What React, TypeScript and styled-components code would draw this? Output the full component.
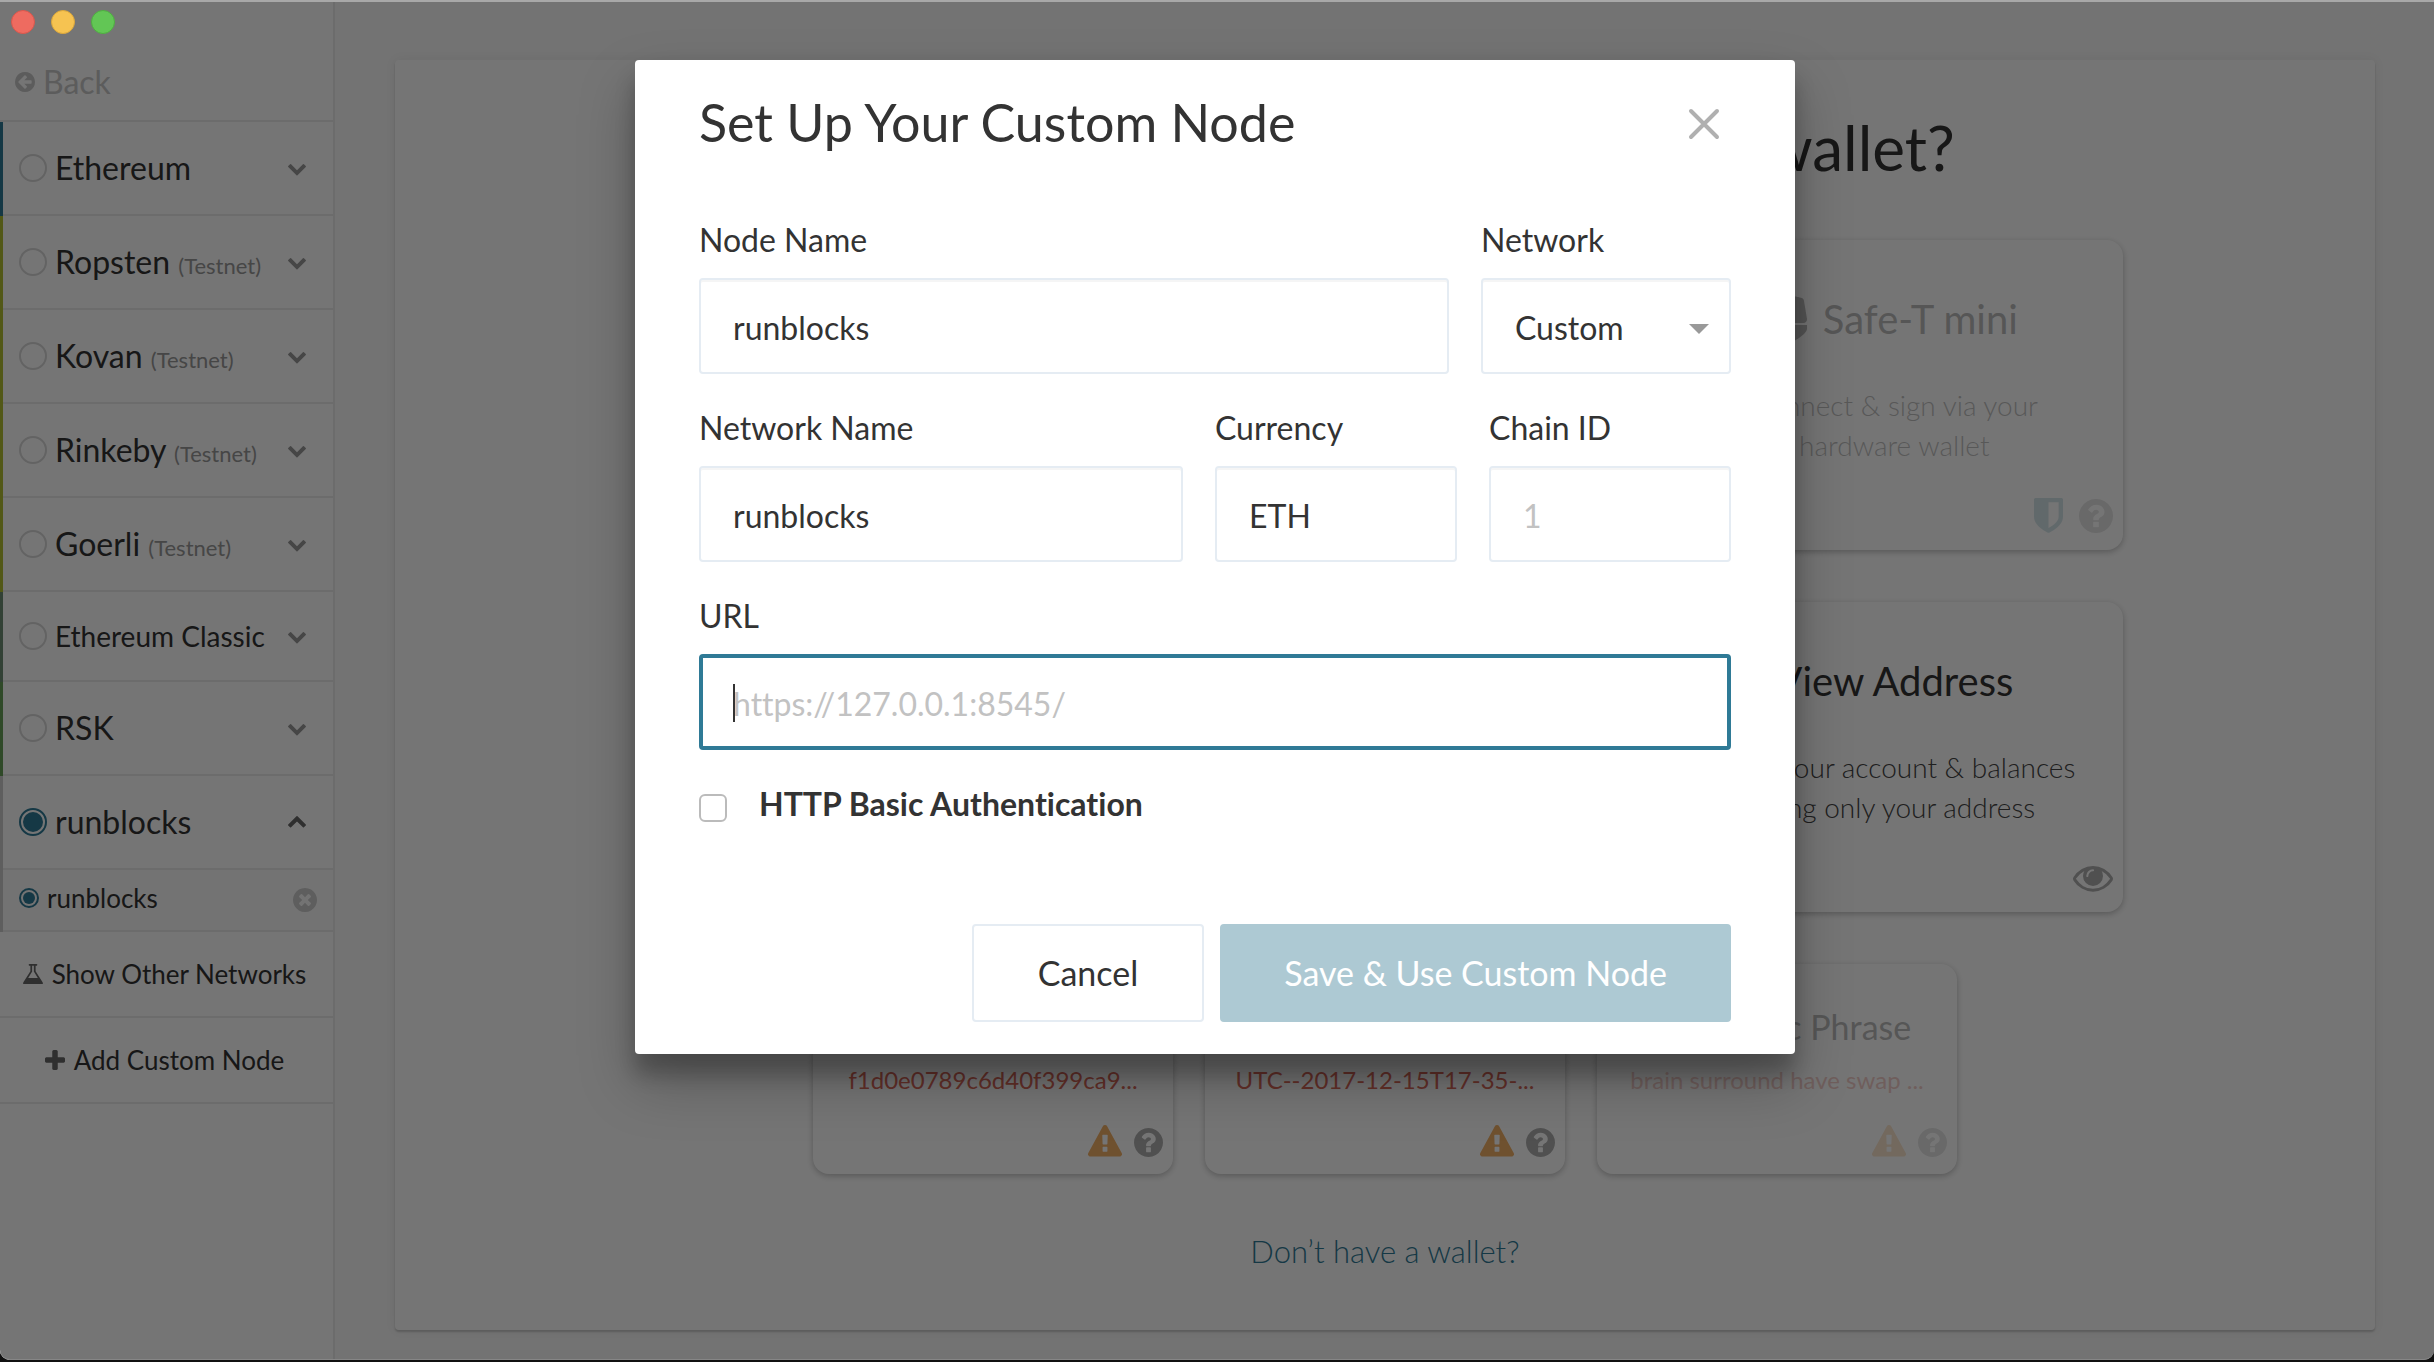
import React from 'react';
import styled, { createGlobalStyle, css } from 'styled-components';

const GlobalStyle = createGlobalStyle`
  *, *::before, *::after { box-sizing: border-box; }
  html, body, #root { height: 100%; }
  body {
    margin: 0;
    overflow: hidden;
    background: #111;
    color: #333;
    font-family: Lato, "Liberation Sans", sans-serif;
    font-size: 32px;
    line-height: 40px;
    font-variant-ligatures: none;
  }
  button, input, select { font: inherit; font-variant-ligatures: none; color: inherit; margin: 0; }
  button { background: none; border: 0; padding: 0; cursor: pointer; }
  h1, h2, h3, p, ul { margin: 0; padding: 0; font-weight: 400; }
  ul { list-style: none; }
`;

/* ---------- icons ---------- */

const CIRCLE =
  'm387-226q0 209-103 385.5t-279.5 279.5-385.5 103-385.5-103-279.5-279.5-103-385.5 103-385.5 279.5-279.5 385.5-103 385.5 103 279.5 279.5 103 385.5z';
const DISC =
  'M1664 896q0 209-103 385.5t-279.5 279.5-385.5 103-385.5-103-279.5-279.5-103-385.5 103-385.5 279.5-279.5 385.5-103 385.5 103 279.5 279.5 103 385.5z';

const ICONS = {
  question: {
    box: '128 128 1536 1536',
    d: 'M1024 1376v-192q0-14-9-23t-23-9h-192q-14 0-23 9t-9 23v192q0 14 9 23t23 9h192q14 0 23-9t9-23zm256-672q0-88-55.5-163t-138.5-116-170-41q-243 0-371 213-15 24 8 42l132 100q7 6 19 6 16 0 25-12 53-68 86-92 34-24 86-24 48 0 85.5 26t37.5 59q0 38-20 61t-68 45q-63 28-115.5 86.5t-52.5 125.5v36q0 14 9 23t23 9h192q14 0 23-9t9-23q0-19 21.5-49.5t54.5-49.5q32-18 49-28.5t46-35 44.5-48 28-60.5 12.5-81z' + DISC,
  },
  warning: {
    box: '0 0 1792 1664',
    d: 'M1024 1375v-190q0-14-9.5-23.5t-22.5-9.5h-192q-13 0-22.5 9.5t-9.5 23.5v190q0 14 9.5 23.5t22.5 9.5h192q13 0 22.5-9.5t9.5-23.5zm-2-374l18-459q0-12-10-19-13-11-24-11h-220q-11 0-24 11-10 7-10 21l17 457q0 10 10 16.5t24 6.5h185q14 0 23.5-6.5t10.5-16.5zm-14-934l768 1408q35 63-2 126-17 29-46.5 46t-63.5 17h-1536q-34 0-63.5-17t-46.5-46q-37-63-2-126l768-1408q17-31 47-49t65-18 65 18 47 49z',
  },
  shield: {
    box: '256 128 1280 1536',
    d: 'M1344 960v-640h-448v1137q119-63 213-137 235-184 235-360zm192-768v768q0 86-33.5 170.5t-83 150-118 127.5-126.5 103-121 77.5-89.5 49.5-42.5 20q-12 6-26 6t-26-6q-16-7-42.5-20t-89.5-49.5-121-77.5-126.5-103-118-127.5-83-150-33.5-170.5v-768q0-26 19-45t45-19h1152q26 0 45 19t19 45z',
  },
  eye: {
    box: '0 384 1792 1152',
    d: 'M1664 960q-152-236-381-353 61 104 61 225 0 185-131.5 316.5t-316.5 131.5-316.5-131.5-131.5-316.5q0-121 61-225-229 117-381 353 133 205 333.5 326.5t434.5 121.5 434.5-121.5 333.5-326.5zm-720-384q0-20-14-34t-34-14q-125 0-214.5 89.5t-89.5 214.5q0 20 14 34t34 14 34-14 14-34q0-86 61-147t147-61q20 0 34-14t14-34zm848 384q0 34-20 69-140 230-376.5 368.5t-499.5 138.5-499.5-139-376.5-368q-20-35-20-69t20-69q140-229 376.5-368t499.5-139 499.5 139 376.5 368q20 35 20 69z',
  },
  remove: {
    box: '128 128 1536 1536',
    d: 'M1277 1122q0-26-19-45l-181-181 181-181q19-19 19-45 0-27-19-46l-90-90q-19-19-46-19-26 0-45 19l-181 181-181-181q-19-19-45-19-27 0-46 19l-90 90q-19 19-19 46 0 26 19 45l181 181-181 181q-19 19-19 45 0 27 19 46l90 90q19 19 46 19 26 0 45-19l181-181 181 181q19 19 45 19 27 0 46-19l90-90q19-19 19-46z' + CIRCLE,
  },
  back: {
    box: '128 128 1536 1536',
    d: 'M1408 960v-128q0-26-19-45t-45-19h-502l189-189q19-19 19-45t-19-45l-91-91q-18-18-45-18t-45 18l-362 362-91 91q-18 18-18 45t18 45l91 91 362 362q18 18 45 18t45-18l91-91q18-18 18-45t-18-45l-189-189h502q26 0 45-19t19-45z' + DISC,
  },
  down: {
    box: '90 533 1612 1035',
    d: 'M1683 808l-742 741q-19 19-45 19t-45-19l-742-741q-19-19-19-45.5t19-45.5l166-165q19-19 45-19t45 19l531 531 531-531q19-19 45-19t45 19l166 165q19 19 19 45.5t-19 45.5z',
  },
  up: {
    box: '90 480 1612 1035',
    d: 'M1683 1331l-166 165q-19 19-45 19t-45-19l-531-531-531 531q-19 19-45 19t-45-19l-166-165q-19-19-19-45.5t19-45.5l742-741q19-19 45-19t45 19l742 741q19 19 19 45.5t-19 45.5z',
  },
  plus: {
    box: '192 128 1408 1408',
    d: 'M1600 736v192q0 40-28 68t-68 28h-416v416q0 40-28 68t-68 28h-192q-40 0-68-28t-28-68v-416h-416q-40 0-68-28t-28-68v-192q0-40 28-68t68-28h416v-416q0-40 28-68t68-28h192q40 0 68 28t28 68v416h416q40 0 68 28t28 68z',
  },
  flask: {
    box: '160 128 1472 1536',
    d: 'M1591 1448q56 89 21.5 152.5t-140.5 63.5h-1152q-106 0-140.5-63.5t21.5-152.5l503-793v-399h-64q-26 0-45-19t-19-45 19-45 45-19h512q26 0 45 19t19 45-19 45-45 19h-64v399zm-779-725l-272 429h712l-272-429-20-31v-436h-128v436z',
  },
};

const Svg = styled.svg`
  display: block;
  flex: none;
  fill: currentColor;
`;

function Icon({ name, width }: { name: keyof typeof ICONS; width: number }) {
  const icon = ICONS[name];
  return (
    <Svg width={width} viewBox={icon.box} fillRule="evenodd" aria-hidden="true">
      <path d={icon.d} />
    </Svg>
  );
}

/* ---------- window ---------- */

const Window = styled.div`
  position: relative;
  display: flex;
  height: calc(100vh - 2px);
  overflow: hidden;
  background: #fafafa;
  border-radius: 0 0 10px 10px;
`;

const WindowEdge = styled.div`
  position: absolute;
  inset: 0;
  z-index: 3;
  pointer-events: none;
  border-top: 2px solid #a8a8a8;
  border-bottom: 1px solid #868686;
  border-radius: 0 0 10px 10px;
`;

const WindowButtons = styled.div`
  position: absolute;
  top: 10px;
  left: 11px;
  z-index: 4;
  display: flex;
  gap: 16px;
`;

const WindowButton = styled.button<{ $fill: string; $edge: string }>`
  width: 24px;
  height: 24px;
  border-radius: 50%;
  background: ${(p) => p.$fill};
  border: 1px solid ${(p) => p.$edge};
`;

/* ---------- sidebar ---------- */

const Sidebar = styled.nav`
  flex: none;
  width: 335px;
  background: #fff;
  border-right: 2px solid #ececec;
`;

const BackButton = styled.button`
  display: flex;
  align-items: center;
  gap: 8px;
  width: 100%;
  height: 122px;
  padding: 44px 15px 0;
  color: #c8c8c8;
  border-bottom: 2px solid #ececec;
`;

const Network = styled.li<{ $color: string }>`
  border-left: 3px solid ${(p) => p.$color};
`;

const NetworkHead = styled.div<{ $short?: boolean }>`
  display: flex;
  align-items: center;
  height: ${(p) => (p.$short ? 90 : 94)}px;
  padding: 0 27px 0 16px;
  border-bottom: 2px solid #ececec;
  font-size: ${(p) => (p.$short ? 28 : 32)}px;
`;

const NetworkLabel = styled.label`
  display: flex;
  align-items: center;
  flex: 1;
  gap: 8px;
  white-space: nowrap;
`;

const Radio = styled.input<{ $small?: boolean }>`
  appearance: none;
  flex: none;
  width: ${(p) => (p.$small ? 20 : 28)}px;
  height: ${(p) => (p.$small ? 20 : 28)}px;
  border: 2px solid #d8d8d8;
  border-radius: 50%;
  &:checked {
    border-color: #2f7a96;
    padding: 2px;
    background: #2f7a96 content-box;
  }
`;

const Tag = styled.small`
  font-size: 22px;
  line-height: 1;
  color: #999;
`;

const Toggle = styled.button<{ $open?: boolean }>`
  padding-top: ${(p) => (p.$open ? 0 : 4)}px;
  color: ${(p) => (p.$open ? '#666' : '#999')};
`;

const NodeRow = styled.div`
  display: flex;
  align-items: center;
  height: 62px;
  padding: 0 16px;
  font-size: 26px;
  background: #fafafa;
  border-bottom: 2px solid #ececec;
  label { padding-bottom: 4px; }
`;

const RemoveButton = styled.button`
  color: #ccc;
`;

const SidebarAction = styled.button`
  display: flex;
  align-items: center;
  justify-content: center;
  gap: 9px;
  width: 100%;
  height: 86px;
  padding-right: 4px;
  font-size: 26px;
  border-bottom: 2px solid #ececec;
  svg { color: #666; }
`;

const NETWORKS = [
  { name: 'Ethereum', color: '#2f7a96' },
  { name: 'Ropsten', color: '#b2c032', test: true },
  { name: 'Kovan', color: '#b2c032', test: true },
  { name: 'Rinkeby', color: '#b2c032', test: true },
  { name: 'Goerli', color: '#b2c032', test: true },
  { name: 'Ethereum Classic', color: '#6e8f75', short: true },
  { name: 'RSK', color: '#679f57' },
];

/* ---------- main panel ---------- */

const Main = styled.main`
  flex: 1;
  display: flex;
  padding: 60px 59px 30px 60px;
`;

const Panel = styled.section`
  flex: 1;
  display: flex;
  flex-direction: column;
  align-items: center;
  padding: 51px 0 0;
  background: #fff;
  border-radius: 4px;
  box-shadow: 0 2px 2px rgba(0, 0, 0, 0.18), 0 0 12px rgba(0, 0, 0, 0.06);
`;

const Question = styled.h1`
  margin-bottom: 57px;
  font-size: 62px;
  line-height: 72px;
`;

const CardGrid = styled.div`
  display: grid;
  grid-template-columns: repeat(3, 1fr);
  gap: 52px;
  width: 1476px;
  max-width: 100%;
  margin-bottom: 52px;
`;

const SmallCardGrid = styled.div`
  display: grid;
  grid-template-columns: repeat(3, 360px);
  gap: 32px;
  margin-bottom: 57px;
`;

const Card = styled.article<{ $small?: boolean; $disabled?: boolean }>`
  display: flex;
  flex-direction: column;
  align-items: center;
  height: ${(p) => (p.$small ? 210 : 310)}px;
  padding: ${(p) => (p.$small ? '43px' : '55px')} 10px 17px;
  text-align: center;
  border-radius: 16px;
  box-shadow: 0 2px 6px rgba(0, 0, 0, 0.25);
  ${(p) =>
    p.$disabled &&
    css`
      > * { opacity: 0.33; }
    `}
`;

const CardTitle = styled.h2`
  display: flex;
  align-items: center;
  gap: 16px;
  margin-bottom: 42px;
  font-size: 40px;
  line-height: 48px;
`;

const CardText = styled.p`
  font-size: 28px;
  font-weight: 300;
  color: #444;
  white-space: pre-line;
`;

const SmallTitle = styled.h2`
  min-height: 40px;
  margin-bottom: 17px;
  font-size: 34px;
`;

const Example = styled.p`
  font-size: 24px;
  line-height: 32px;
  color: #d9695b;
`;

const CardIcons = styled.div<{ $gap: number }>`
  display: flex;
  align-items: flex-end;
  align-self: flex-end;
  gap: ${(p) => p.$gap}px;
  margin-top: auto;
  color: #aeaeae;
`;

const EyeIcon = styled.div`
  align-self: flex-end;
  margin: auto 0 3px;
  color: #aeaeae;
`;

const Tint = styled.span<{ $color: string }>`
  color: ${(p) => p.$color};
`;

const HelpLink = styled.a`
  font-size: 31px;
  font-weight: 300;
  color: #2f7a96;
  text-decoration: none;
`;

type CardData = {
  id: string;
  title?: string;
  text?: string;
  disabled?: boolean;
  logo?: boolean;
  view?: boolean;
};

const CARDS: CardData[] = [
  { id: 'a' },
  { id: 'b' },
  { id: 'safe-t', title: 'Safe-T mini', text: 'Connect & sign via your\nhardware wallet', disabled: true, logo: true },
  { id: 'c' },
  { id: 'd' },
  { id: 'view', title: 'View Address', text: 'View your account & balances\nusing only your address', view: true },
];

const SMALL_CARDS: CardData[] = [
  { id: 'key', text: 'f1d0e0789c6d40f399ca9...' },
  { id: 'file', text: 'UTC--2017-12-15T17-35-...' },
  { id: 'phrase', title: 'Mnemonic Phrase', text: 'brain surround have swap ...', disabled: true },
];

/* ---------- dialog ---------- */

const Overlay = styled.div`
  position: absolute;
  inset: 0;
  z-index: 2;
  display: flex;
  justify-content: center;
  align-items: flex-start;
  padding: 60px 4px 0 0;
  background: rgba(0, 0, 0, 0.54);
`;

const Dialog = styled.form`
  width: 1160px;
  max-width: 100%;
  padding: 30px 64px 32px;
  background: #fff;
  border-radius: 4px;
  box-shadow: 0 28px 56px rgba(0, 0, 0, 0.25), 0 20px 20px rgba(0, 0, 0, 0.22);
`;

const DialogHead = styled.header`
  display: flex;
  align-items: center;
  justify-content: space-between;
  margin-bottom: 66px;
  padding-right: 11px;
`;

const DialogTitle = styled.h2`
  font-size: 52px;
  line-height: 64px;
`;

const CloseButton = styled.button`
  padding-top: 4px;
  color: #b0b0b0;
`;

const Fields = styled.div`
  display: flex;
  flex-direction: column;
  gap: 34px;
`;

const FieldRow = styled.div<{ $cols: string }>`
  display: grid;
  grid-template-columns: ${(p) => p.$cols};
  gap: 32px;
`;

const Field = styled.label`
  display: flex;
  flex-direction: column;
  gap: 18px;
  min-width: 0;
`;

const control = css`
  width: 100%;
  height: 96px;
  padding: 2px 32px 0;
  border: 2px solid #e5ecf3;
  border-radius: 4px;
  background: #fff;
  box-shadow: inset 0 2px 0 rgba(0, 0, 0, 0.04);
  outline: 0;
`;

const TextInput = styled.input`
  ${control}
  caret-color: transparent;
  &::placeholder { color: #c2c2c2; opacity: 1; }
`;

const FocusedInput = styled(TextInput)`
  border: 4px solid #2f7a96;
  padding: 2px 30px 0;
  box-shadow: none;
`;

const ControlBox = styled.span`
  position: relative;
  display: block;
`;

const Caret = styled.span`
  position: absolute;
  top: 30px;
  left: 34px;
  width: 2px;
  height: 38px;
  background: #333;
`;

const Select = styled.select`
  ${control}
  padding-top: 4px;
  appearance: none;
`;

const Arrow = styled.span`
  position: absolute;
  top: 46px;
  right: 22px;
  border: 10px solid transparent;
  border-top-color: #999;
  border-bottom: 0;
  pointer-events: none;
`;

const CheckField = styled.label`
  display: flex;
  align-items: flex-end;
  gap: 32px;
  font-weight: 700;
`;

const Checkbox = styled.input`
  appearance: none;
  width: 28px;
  height: 28px;
  margin: 0 0 2px;
  border: 2px solid #bbb;
  border-radius: 6px;
  background: #fff;
`;

const Actions = styled.footer`
  display: flex;
  justify-content: flex-end;
  gap: 16px;
  margin-top: 100px;
`;

const ActionButton = styled.button<{ $primary?: boolean }>`
  height: 98px;
  padding: 0 ${(p) => (p.$primary ? 62 : 64)}px;
  font-size: 34px;
  border: 2px solid ${(p) => (p.$primary ? '#adc9d3' : '#e5ecf3')};
  border-radius: 4px;
  background: ${(p) => (p.$primary ? '#adc9d3' : '#fff')};
  color: ${(p) => (p.$primary ? '#fff' : '#333')};
`;

export default function App() {
  return (
    <>
      <GlobalStyle />
      <Window>
        <Sidebar aria-label="Networks">
          <BackButton type="button">
            <Icon name="back" width={20} />
            Back
          </BackButton>
          <ul>
            {NETWORKS.map((n) => (
              <Network key={n.name} $color={n.color}>
                <NetworkHead $short={n.short}>
                  <NetworkLabel>
                    <Radio type="radio" name="network" />
                    <span>
                      {n.name} {n.test && <Tag>(Testnet)</Tag>}
                    </span>
                  </NetworkLabel>
                  <Toggle type="button" aria-label={`Show ${n.name} nodes`}>
                    <Icon name="down" width={18} />
                  </Toggle>
                </NetworkHead>
              </Network>
            ))}
            <Network $color="#ccc">
              <NetworkHead>
                <NetworkLabel>
                  <Radio type="radio" name="network" defaultChecked />
                  runblocks
                </NetworkLabel>
                <Toggle type="button" $open aria-label="Hide runblocks nodes">
                  <Icon name="up" width={18} />
                </Toggle>
              </NetworkHead>
              <NodeRow>
                <NetworkLabel>
                  <Radio type="radio" name="node" $small defaultChecked />
                  runblocks
                </NetworkLabel>
                <RemoveButton type="button" aria-label="Remove node">
                  <Icon name="remove" width={24} />
                </RemoveButton>
              </NodeRow>
            </Network>
          </ul>
          <SidebarAction type="button">
            <Icon name="flask" width={20} />
            Show Other Networks
          </SidebarAction>
          <SidebarAction type="button">
            <Icon name="plus" width={20} />
            Add Custom Node
          </SidebarAction>
        </Sidebar>

        <Main>
          <Panel>
            <Question>How would you like to access your wallet?</Question>
            <CardGrid>
              {CARDS.map((c) => (
                <Card key={c.id} $disabled={c.disabled}>
                  {c.title && (
                    <CardTitle>
                      {c.logo && (
                        <Svg width="36" height="46" viewBox="0 0 36 46" aria-hidden="true">
                          <path d="M18 0Q25 0 31 2Q33 3 33 5L36 23Q36 26 33 27H3Q0 26 0 23L3 5Q3 3 5 2Q11 0 18 0Z" />
                          <path d="M0 29H36V33Q36 35 33 38Q24 46 18 46Q12 46 3 38Q0 35 0 33Z" />
                        </Svg>
                      )}
                      {c.title}
                    </CardTitle>
                  )}
                  <CardText>{c.text}</CardText>
                  {c.view ? (
                    <EyeIcon>
                      <Icon name="eye" width={40} />
                    </EyeIcon>
                  ) : (
                    <CardIcons $gap={16}>
                      <Tint $color="#7fb0c0">
                        <Icon name="shield" width={29} />
                      </Tint>
                      <Icon name="question" width={34} />
                    </CardIcons>
                  )}
                </Card>
              ))}
            </CardGrid>
            <SmallCardGrid>
              {SMALL_CARDS.map((c) => (
                <Card key={c.id} $small $disabled={c.disabled}>
                  <SmallTitle>{c.title}</SmallTitle>
                  <Example>{c.text}</Example>
                  <CardIcons $gap={12}>
                    <Tint $color="#f2b067">
                      <Icon name="warning" width={34} />
                    </Tint>
                    <Icon name="question" width={29} />
                  </CardIcons>
                </Card>
              ))}
            </SmallCardGrid>
            <HelpLink href="#create">Don’t have a wallet?</HelpLink>
          </Panel>
        </Main>

        <Overlay>
          <Dialog role="dialog" aria-labelledby="dialog-title" onSubmit={(e) => e.preventDefault()}>
            <DialogHead>
              <DialogTitle id="dialog-title">Set Up Your Custom Node</DialogTitle>
              <CloseButton type="button" aria-label="Close">
                <Svg width="32" height="32" viewBox="0 0 32 32" aria-hidden="true">
                  <path d="M3 3L29 29M29 3L3 29" stroke="currentColor" strokeWidth="4" strokeLinecap="round" />
                </Svg>
              </CloseButton>
            </DialogHead>
            <Fields>
              <FieldRow $cols="750fr 250fr">
                <Field>
                  Node Name
                  <TextInput type="text" defaultValue="runblocks" />
                </Field>
                <Field>
                  Network
                  <ControlBox>
                    <Select defaultValue="Custom">
                      <option>Custom</option>
                    </Select>
                    <Arrow />
                  </ControlBox>
                </Field>
              </FieldRow>
              <FieldRow $cols="2fr 1fr 1fr">
                <Field>
                  Network Name
                  <TextInput type="text" defaultValue="runblocks" />
                </Field>
                <Field>
                  Currency
                  <TextInput type="text" defaultValue="ETH" />
                </Field>
                <Field>
                  Chain ID
                  <TextInput type="text" placeholder="1" />
                </Field>
              </FieldRow>
              <Field>
                URL
                <ControlBox>
                  <FocusedInput type="text" placeholder="https://127.0.0.1:8545/" />
                  <Caret />
                </ControlBox>
              </Field>
              <CheckField>
                <Checkbox type="checkbox" />
                HTTP Basic Authentication
              </CheckField>
            </Fields>
            <Actions>
              <ActionButton type="button">Cancel</ActionButton>
              <ActionButton type="submit" $primary>
                Save &amp; Use Custom Node
              </ActionButton>
            </Actions>
          </Dialog>
        </Overlay>

        <WindowEdge />
        <WindowButtons>
          <WindowButton type="button" aria-label="Close window" $fill="#ee6b60" $edge="#d9574c" />
          <WindowButton type="button" aria-label="Minimize window" $fill="#f6c351" $edge="#dba73b" />
          <WindowButton type="button" aria-label="Zoom window" $fill="#62c655" $edge="#4fae41" />
        </WindowButtons>
      </Window>
    </>
  );
}
